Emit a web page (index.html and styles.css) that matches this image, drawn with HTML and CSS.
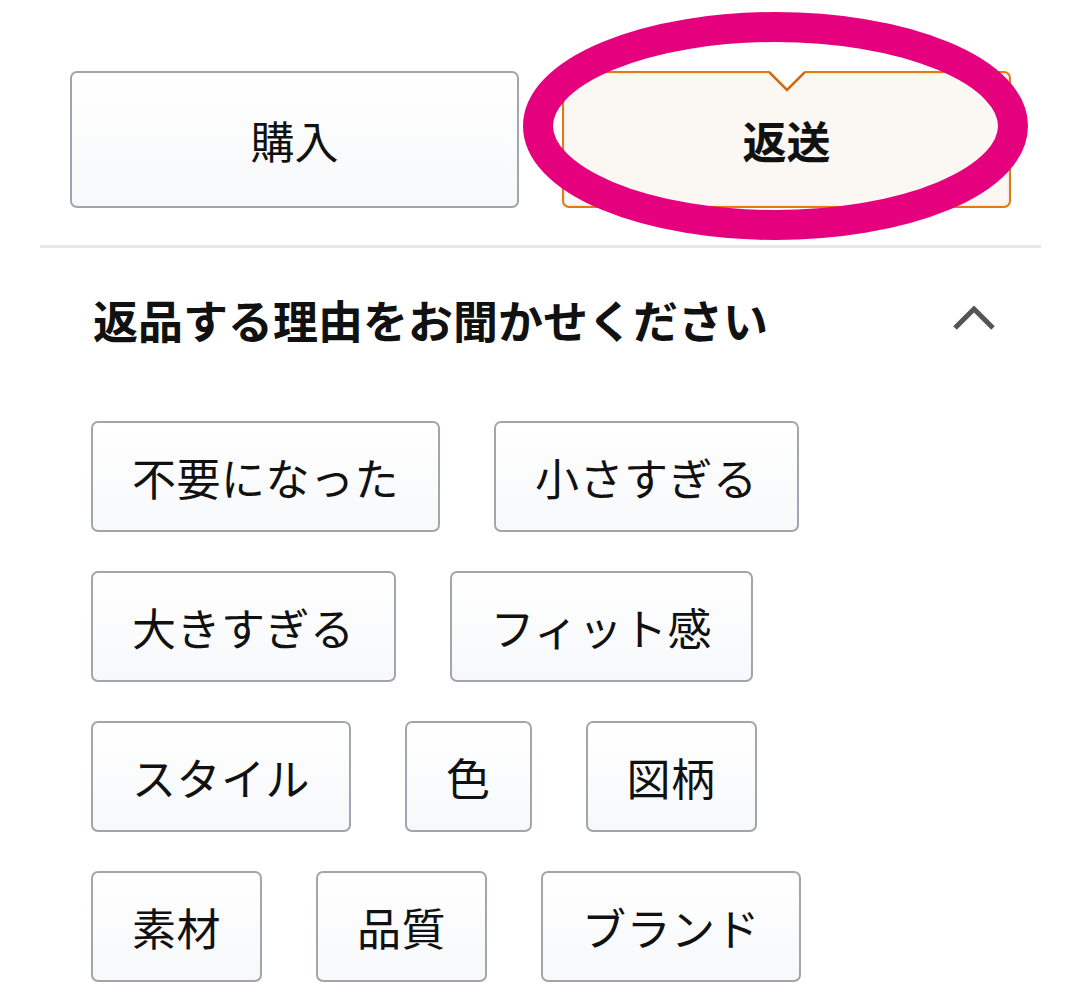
FILE: index.html
```html
<!DOCTYPE html>
<html lang="ja">
  <head>
    <meta charset="UTF-8" />
    <meta name="viewport" content="width=device-width, initial-scale=1.0" />
    <title>返品する理由</title>
    <link rel="stylesheet" href="styles.css">
  </head>
  <body>
    <div class="page">
      <div class="tabs">
        <button type="button" class="tab">購入</button>
        <button type="button" class="tab tab-active">
          <svg class="notch" width="36" height="21" viewBox="0 0 36 21">
            <polygon points="0,0 18,19 36,0" fill="#ffffff" />
            <polyline points="0,1 18,19 36,1" fill="none" stroke="#d06a0c" stroke-width="2.5" />
          </svg>
          返送
        </button>
        <!-- annotation circle -->
        <svg class="mark" width="505" height="228" viewBox="0 0 505 228">
          <ellipse cx="252.5" cy="114" rx="237.5" ry="99" fill="none" stroke="#e5007d" stroke-width="30" />
        </svg>
      </div>

      <hr class="divider" />

      <div class="section-head">
        <h2>返品する理由をお聞かせください</h2>
        <svg class="chevron" width="44" height="26" viewBox="0 0 44 26">
          <polyline points="3,23 22,4 41,23" fill="none" stroke="#555555" stroke-width="5" />
        </svg>
      </div>

      <div class="chips">
        <button type="button" class="chip">不要になった</button>
        <button type="button" class="chip">小さすぎる</button>
        <button type="button" class="chip">大きすぎる</button>
        <button type="button" class="chip">フィット感</button>
        <button type="button" class="chip">スタイル</button>
        <button type="button" class="chip">色</button>
        <button type="button" class="chip">図柄</button>
        <button type="button" class="chip">素材</button>
        <button type="button" class="chip">品質</button>
        <button type="button" class="chip">ブランド</button>
      </div>
    </div>
  </body>
</html>
```

FILE: styles.css
```css
body {
  margin: 0;
  background-color: #ffffff;
  color: #111111;
  font-family: "Noto Sans CJK JP", "Noto Sans", sans-serif;
}
.page {
  padding: 71px 38px 0 40px;
}
.tabs {
  position: relative;
  display: flex;
  gap: 43px;
  margin: 0 30px;
}
.tab {
  position: relative;
  flex: 1;
  height: 137px;
  border: 2px solid #a2a6ac;
  border-radius: 7px;
  background: linear-gradient(to bottom, #ffffff, #f7f8fa);
  color: #111111;
  font-family: inherit;
  font-size: 44px;
  line-height: 60px;
  padding: 0;
  cursor: pointer;
}
.tab-active {
  border-color: #e47911;
  background: #fbf7f2;
  box-shadow: inset 0 0 3px rgba(0, 0, 0, 0.12);
  font-weight: 700;
}
.notch {
  position: absolute;
  top: -2px;
  left: 50%;
  margin-left: -18px;
}
.mark {
  position: absolute;
  left: 453px;
  top: -59px;
  pointer-events: none;
}
.divider {
  border: none;
  height: 3px;
  background-color: #e7e7e7;
  margin: 37px 0 0 0;
}
.section-head {
  display: flex;
  align-items: center;
  justify-content: space-between;
  padding: 42px 45px 0 53px;
}
h2 {
  margin: 0;
  font-size: 45px;
  line-height: 60px;
  font-weight: 700;
  color: #111111;
}
.chevron {
  margin-top: -4px;
}
.chips {
  display: flex;
  flex-wrap: wrap;
  gap: 39px 54px;
  padding: 71px 0 0 51px;
  width: 720px;
}
.chip {
  height: 111px;
  padding: 0 39px;
  border: 2px solid #a2a6ac;
  border-radius: 7px;
  background: linear-gradient(to bottom, #ffffff, #f7f8fa);
  color: #111111;
  font-family: inherit;
  font-size: 44px;
  line-height: 60px;
  letter-spacing: 0.5px;
  cursor: pointer;
}
```
